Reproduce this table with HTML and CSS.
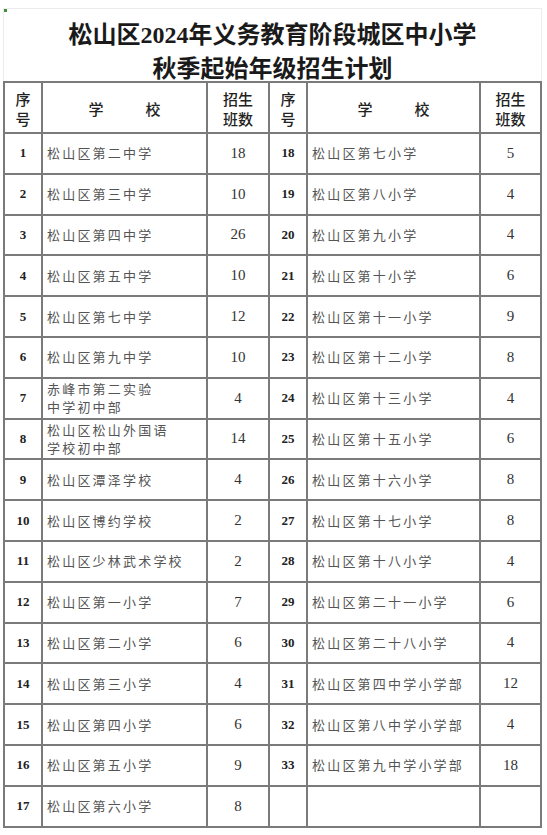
FILE: index.html
```html
<!DOCTYPE html>
<html lang="zh-CN">
<head>
<meta charset="utf-8">
<title>松山区2024年义务教育阶段城区中小学秋季起始年级招生计划</title>
<link rel="stylesheet" href="styles.css">
</head>
<body>
<div class="page">
  <div class="title-box">
    <h1 class="title">松山区<span class="num">2024</span>年义务教育阶段城区中小学<br>秋季起始年级招生计划</h1>
  </div>
  <table class="plan">
    <colgroup>
      <col class="c-idx"><col class="c-name"><col class="c-cnt">
      <col class="c-idx"><col class="c-name2"><col class="c-cnt2">
    </colgroup>
    <thead>
      <tr>
        <th>序<br>号</th><th><span class="spread"><span>学</span><span>校</span></span></th><th>招生<br>班数</th>
        <th>序<br>号</th><th><span class="spread"><span>学</span><span>校</span></span></th><th>招生<br>班数</th>
      </tr>
    </thead>
    <tbody>
      <tr><td class="idx">1</td><td class="name">松山区第二中学</td><td class="cnt">18</td><td class="idx">18</td><td class="name">松山区第七小学</td><td class="cnt">5</td></tr>
      <tr><td class="idx">2</td><td class="name">松山区第三中学</td><td class="cnt">10</td><td class="idx">19</td><td class="name">松山区第八小学</td><td class="cnt">4</td></tr>
      <tr><td class="idx">3</td><td class="name">松山区第四中学</td><td class="cnt">26</td><td class="idx">20</td><td class="name">松山区第九小学</td><td class="cnt">4</td></tr>
      <tr><td class="idx">4</td><td class="name">松山区第五中学</td><td class="cnt">10</td><td class="idx">21</td><td class="name">松山区第十小学</td><td class="cnt">6</td></tr>
      <tr><td class="idx">5</td><td class="name">松山区第七中学</td><td class="cnt">12</td><td class="idx">22</td><td class="name">松山区第十一小学</td><td class="cnt">9</td></tr>
      <tr><td class="idx">6</td><td class="name">松山区第九中学</td><td class="cnt">10</td><td class="idx">23</td><td class="name">松山区第十二小学</td><td class="cnt">8</td></tr>
      <tr><td class="idx">7</td><td class="name two">赤峰市第二实验<br>中学初中部</td><td class="cnt">4</td><td class="idx">24</td><td class="name">松山区第十三小学</td><td class="cnt">4</td></tr>
      <tr><td class="idx">8</td><td class="name two">松山区松山外国语<br>学校初中部</td><td class="cnt">14</td><td class="idx">25</td><td class="name">松山区第十五小学</td><td class="cnt">6</td></tr>
      <tr><td class="idx">9</td><td class="name">松山区潭泽学校</td><td class="cnt">4</td><td class="idx">26</td><td class="name">松山区第十六小学</td><td class="cnt">8</td></tr>
      <tr><td class="idx">10</td><td class="name">松山区博约学校</td><td class="cnt">2</td><td class="idx">27</td><td class="name">松山区第十七小学</td><td class="cnt">8</td></tr>
      <tr><td class="idx">11</td><td class="name">松山区少林武术学校</td><td class="cnt">2</td><td class="idx">28</td><td class="name">松山区第十八小学</td><td class="cnt">4</td></tr>
      <tr><td class="idx">12</td><td class="name">松山区第一小学</td><td class="cnt">7</td><td class="idx">29</td><td class="name">松山区第二十一小学</td><td class="cnt">6</td></tr>
      <tr><td class="idx">13</td><td class="name">松山区第二小学</td><td class="cnt">6</td><td class="idx">30</td><td class="name">松山区第二十八小学</td><td class="cnt">4</td></tr>
      <tr><td class="idx">14</td><td class="name">松山区第三小学</td><td class="cnt">4</td><td class="idx">31</td><td class="name">松山区第四中学小学部</td><td class="cnt">12</td></tr>
      <tr><td class="idx">15</td><td class="name">松山区第四小学</td><td class="cnt">6</td><td class="idx">32</td><td class="name">松山区第八中学小学部</td><td class="cnt">4</td></tr>
      <tr><td class="idx">16</td><td class="name">松山区第五小学</td><td class="cnt">9</td><td class="idx">33</td><td class="name">松山区第九中学小学部</td><td class="cnt">18</td></tr>
      <tr><td class="idx">17</td><td class="name">松山区第六小学</td><td class="cnt">8</td><td class="idx"></td><td class="name"></td><td class="cnt"></td></tr>
    </tbody>
  </table>
</div>
</body>
</html>
```

FILE: styles.css
```css
html, body {
  margin: 0;
  padding: 0;
  background: #ffffff;
}

.page {
  padding: 8px 0 0 3px;
  width: 539px;
}

.title-box {
  position: relative;
  border: 1px solid #ececec;
  border-bottom: none;
  height: 73px;
  box-sizing: border-box;
  padding-top: 8px;
}

.title-box::before {
  content: "";
  position: absolute;
  left: 0;
  top: 0;
  width: 3px;
  height: 3px;
  background: #3f8f3a;
}

.title {
  margin: 0;
  text-align: center;
  font-family: "Noto Sans CJK SC", sans-serif;
  font-weight: 700;
  font-size: 24px;
  line-height: 31px;
  color: #1a1a1a;
}

.title .num {
  font-family: "Liberation Serif", serif;
  font-weight: 700;
}

.plan {
  width: 539px;
  border-collapse: collapse;
  table-layout: fixed;
  color: #333;
}

.c-idx { width: 38px; }
.c-name { width: 165px; }
.c-cnt { width: 62px; }
.c-name2 { width: 173px; }
.c-cnt2 { width: 61px; }

.plan th,
.plan td {
  border: 2px solid #7a7a7a;
  padding: 0;
}

.plan thead tr {
  height: 51px;
}

.plan th {
  font-family: "Noto Sans CJK SC", sans-serif;
  font-weight: 500;
  font-size: 15px;
  line-height: 20px;
  color: #222;
  text-align: center;
  vertical-align: middle;
  padding-top: 3px;
}

.spread {
  display: inline-flex;
  gap: 42px;
}

.plan tbody tr {
  height: 40.8px;
}

.idx {
  font-family: "Liberation Serif", serif;
  font-weight: 700;
  font-size: 13px;
  text-align: center;
  color: #222;
}

.name {
  font-family: "Noto Sans CJK SC", sans-serif;
  font-size: 13px;
  letter-spacing: 2.2px;
  color: #555;
  padding-left: 4px !important;
  white-space: nowrap;
  line-height: 18px;
}

.cnt {
  font-family: "Liberation Serif", serif;
  font-size: 15px;
  text-align: center;
  color: #333;
}
```
